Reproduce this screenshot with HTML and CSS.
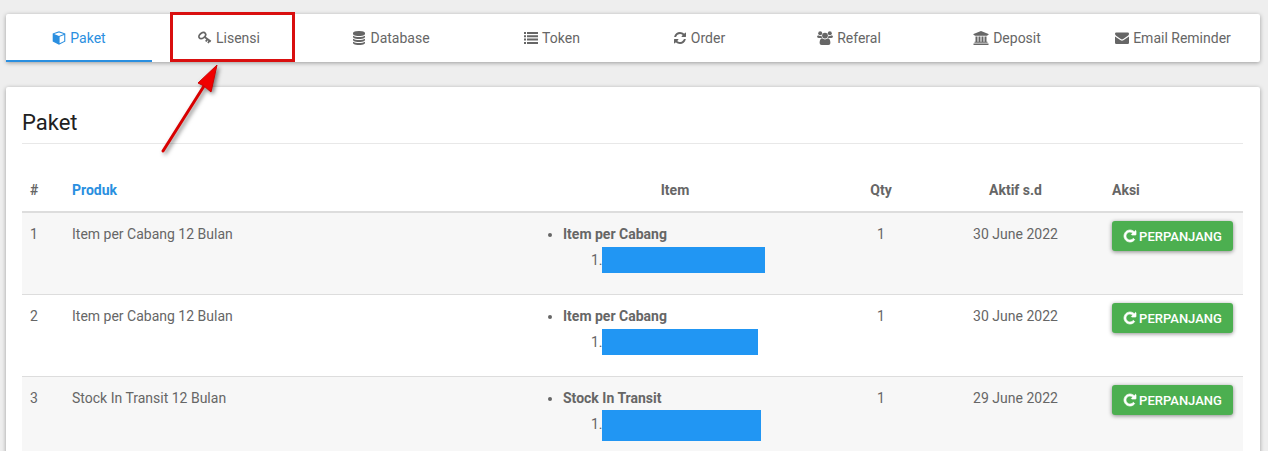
FILE: index.html
```
<!DOCTYPE html>
<html lang="id">
  <head>
    <meta charset="utf-8">
    <title>Paket</title>
    <link rel="stylesheet" href="styles.css">
  </head>
  <body>
    <svg class="sprite" aria-hidden="true">
      <symbol id="icon-repeat" viewBox="0 0 1792 1792"><path d="M1664 256v448q0 26-19 45t-45 19h-448q-42 0-59-40-17-39 14-69l138-138q-148-137-349-137-104 0-198.5 40.5t-163.5 109.5-109.5 163.5-40.5 198.5 40.5 198.5 109.5 163.5 163.5 109.5 198.5 40.5q119 0 225-52t179-147q7-10 23-12 15 0 25 9l137 138q9 8 9.5 20.5t-7.5 22.5q-109 132-264 204.5t-327 72.5q-156 0-298-61t-245-164-164-245-61-298 61-298 164-245 245-164 298-61q147 0 284.5 55.5t244.5 156.5l130-129q29-31 70-14 39 17 39 59z"/></symbol>
    </svg>

    <nav class="tabs">
      <a href="#" class="tab active">
        <svg class="icon" viewBox="0 0 14 14"><path d="M7 0.3L13.3 2.6V10.6L7 13.8L0.7 10.6V2.6zM7 1.4L2.2 3.1L7 4.9L11.8 3.1zM7.6 12.3L12.2 10V4.1L7.6 5.8z" fill-rule="evenodd"/></svg>
        Paket
      </a>
      <a href="#" class="tab">
        <svg class="icon" viewBox="0 0 14 14"><g fill="none" stroke="currentColor"><ellipse cx="4.3" cy="4.6" rx="3.7" ry="2.5" transform="rotate(-35 4.3 4.6)" stroke-width="1.7"/><path d="M6.6 6L12.8 10.4M9.3 8.2L7.8 10.4M11.5 9.8L10 12" stroke-width="1.8"/></g></svg>
        Lisensi
        <span class="highlight"></span>
        <svg class="arrow" viewBox="0 0 64 92" width="64" height="92" aria-hidden="true"><path d="M4 88L45 23" stroke="#d90000" stroke-width="3" stroke-linecap="round"/><path d="M58 2L39 20L45 23L52 29z" fill="#f00000" stroke="#d00000"/></svg>
      </a>
      <a href="#" class="tab">
        <svg class="icon" viewBox="0 0 1792 1792"><path d="M896 768q237 0 443-43t325-127v170q0 69-103 128t-280 93.500-385 34.500-385-34.500-280-93.500-103-128v-170q119 84 325 127t443 43zm0 768q237 0 443-43t325-127v170q0 69-103 128t-280 93.500-385 34.500-385-34.500-280-93.500-103-128v-170q119 84 325 127t443 43zm0-384q237 0 443-43t325-127v170q0 69-103 128t-280 93.500-385 34.500-385-34.500-280-93.500-103-128v-170q119 84 325 127t443 43zm0-1152q208 0 385 34.500t280 93.500 103 128v128q0 69-103 128t-280 93.500-385 34.500-385-34.500-280-93.500-103-128v-128q0-69 103-128t280-93.500 385-34.500z"/></svg>
        Database
      </a>
      <a href="#" class="tab">
        <svg class="icon" viewBox="0 0 14 14"><path d="M0 1h2v2H0zM3 1h11v2H3zM0 4.300h2v2H0zM3 4.300h11v2H3zM0 7.600h2v2H0zM3 7.600h11v2H3zM0 11h2v2H0zM3 11h11v2H3z"/></svg>
        Token
      </a>
      <a href="#" class="tab">
        <svg class="icon" viewBox="0 0 1792 1792"><path d="M1639 1056q0 5-1 7-64 268-268 434.500t-478 166.500q-146 0-282.500-55t-243.500-157l-129 129q-19 19-45 19t-45-19-19-45v-448q0-26 19-45t45-19h448q26 0 45 19t19 45-19 45l-137 137q71 66 161 102t187 36q134 0 250-65t186-179q11-17 53-117 8-23 30-23h192q13 0 22.500 9.500t9.500 22.500zm25-800v448q0 26-19 45t-45 19h-448q-26 0-45-19t-19-45 19-45l138-138q-148-137-349-137-134 0-250 65t-186 179q-11 17-53 117-8 23-30 23h-199q-13 0-22.500-9.500t-9.500-22.500v-7q65-268 270-434.500t480-166.500q146 0 284 55.500t245 156.500l130-129q19-19 45-19t45 19 19 45z"/></svg>
        Order
      </a>
      <a href="#" class="tab">
        <svg class="icon icon-wide" viewBox="0 0 16 14"><circle cx="3.200" cy="2.300" r="2"/><circle cx="12.800" cy="2.300" r="2"/><circle cx="8" cy="4.600" r="2.900"/><path d="M1 4.300Q3 5.600 4.600 4.700Q4.500 6 5.200 7H1.600Q0 7 0 5.600zM15 4.300Q13 5.600 11.400 4.700Q11.500 6 10.800 7H14.400Q16 7 16 5.600zM5 7.300Q8 9.600 11 7.300Q13.400 8 13.400 12Q13.400 14 11.400 14H4.600Q2.600 14 2.600 12Q2.600 8 5 7.300z"/></svg>
        Referal
      </a>
      <a href="#" class="tab">
        <svg class="icon icon-wide" viewBox="0 0 15 14"><path d="M7.500 0L15 3V4H14V4.800H1V4H0V3zM2 5.500H4V10.800H5V5.500H7V10.800H8V5.500H10V10.800H11V5.500H13V10.800H14V11.800H1V10.800H2zM0 12.500H15V14H0z"/></svg>
        Deposit
      </a>
      <a href="#" class="tab">
        <svg class="icon" viewBox="0 0 14 14"><path d="M1.200 1.500H12.800Q14 1.500 14 2.700Q14 4 12.900 4.800L8.200 8Q7 8.800 5.800 8L1.100 4.800Q0 4 0 2.800Q0 1.500 1.200 1.500zM0 5.400L5.600 9.300Q7 10.200 8.400 9.300L14 5.400V11.700Q14 13 12.800 13H1.200Q0 13 0 11.700z"/></svg>
        Email Reminder
      </a>
    </nav>

    <main class="card">
      <h1>Paket</h1>
      <table class="packages">
        <colgroup>
          <col class="col-no">
          <col class="col-product">
          <col class="col-item">
          <col class="col-qty">
          <col class="col-date">
          <col class="col-action">
        </colgroup>
        <thead>
          <tr>
            <th>#</th>
            <th><a href="#">Produk</a></th>
            <th class="center">Item</th>
            <th class="center">Qty</th>
            <th class="center">Aktif s.d</th>
            <th>Aksi</th>
          </tr>
        </thead>
        <tbody>
          <tr>
            <td>1</td>
            <td>Item per Cabang 12 Bulan</td>
            <td>
              <ul>
                <li><b>Item per Cabang</b>
                  <ol><li><span class="mask" style="width: 163px"></span></li></ol>
                </li>
              </ul>
            </td>
            <td class="center">1</td>
            <td class="center">30 June 2022</td>
            <td><button type="button" class="btn"><svg class="icon"><use href="#icon-repeat"/></svg> Perpanjang</button></td>
          </tr>
          <tr>
            <td>2</td>
            <td>Item per Cabang 12 Bulan</td>
            <td>
              <ul>
                <li><b>Item per Cabang</b>
                  <ol><li><span class="mask" style="width: 156px"></span></li></ol>
                </li>
              </ul>
            </td>
            <td class="center">1</td>
            <td class="center">30 June 2022</td>
            <td><button type="button" class="btn"><svg class="icon"><use href="#icon-repeat"/></svg> Perpanjang</button></td>
          </tr>
          <tr>
            <td>3</td>
            <td>Stock In Transit 12 Bulan</td>
            <td>
              <ul>
                <li><b>Stock In Transit</b>
                  <ol><li><span class="mask tall" style="width: 159px"></span></li></ol>
                </li>
              </ul>
            </td>
            <td class="center">1</td>
            <td class="center">29 June 2022</td>
            <td><button type="button" class="btn"><svg class="icon"><use href="#icon-repeat"/></svg> Perpanjang</button></td>
          </tr>
        </tbody>
      </table>
    </main>
  </body>
</html>
```
FILE: styles.css
```
* {
  box-sizing: border-box;
}

body {
  margin: 0;
  padding: 14px 8px 0 6px;
  background-color: #eee;
  color: #666;
  font-family: Roboto, sans-serif;
  font-size: 14px;
  line-height: 26px;
  overflow: hidden;
}

a {
  color: #2a8fe0;
  text-decoration: none;
}

.sprite {
  display: none;
}

.icon {
  width: 14px;
  height: 14px;
  fill: currentColor;
}

.icon-wide {
  width: 16px;
}

.tabs,
.card {
  background-color: #fff;
  border-radius: 2px;
  box-shadow: 0 1px 4px rgba(0, 0, 0, 0.35);
}

.tabs {
  display: grid;
  grid-template-columns: 146fr 154fr 170fr 152fr 142fr 158fr 158fr 174fr;
  margin-bottom: 25px;
}

.tab {
  position: relative;
  display: flex;
  align-items: center;
  justify-content: center;
  gap: 4px;
  height: 48px;
  padding-top: 2px;
  border-bottom: 2px solid transparent;
  color: #666;
  white-space: nowrap;
}

.tab.active {
  color: #2a8fe0;
  border-bottom-color: #2a8fe0;
}

/* red marker around the tab and the arrow pointing at it */
.highlight {
  position: absolute;
  top: -2px;
  left: 18px;
  width: 125px;
  height: 50px;
  border: 3px solid #d90f0f;
}

.arrow {
  position: absolute;
  top: 49px;
  left: 7px;
  z-index: 1;
  filter: drop-shadow(2px 2px 2px rgba(0, 0, 0, 0.5));
}

.card {
  padding: 20px 17px 0 16px;
}

h1 {
  margin: 0 0 25px;
  padding-bottom: 4px;
  border-bottom: 1px solid #e8e8e8;
  color: #212121;
  font-size: 22px;
  font-weight: 400;
  line-height: 32px;
}

.packages {
  width: 100%;
  table-layout: fixed;
  border-collapse: collapse;
}

.col-no {
  width: 42px;
}

.col-item {
  width: 320px;
}

.col-qty {
  width: 92px;
}

.col-date {
  width: 177px;
}

.col-action {
  width: 139px;
}

.packages th,
.packages td {
  padding: 8px;
  text-align: left;
  vertical-align: top;
}

.packages th {
  border-bottom: 2px solid #ddd;
  font-weight: 700;
}

.packages td {
  border-top: 1px solid #ddd;
}

.packages .center {
  text-align: center;
}

.packages tbody tr:nth-child(odd) {
  background-color: #f7f7f7;
}

.packages ul {
  margin: 0 0 13px;
  padding-left: 40px;
}

.packages ol {
  margin: 0;
  padding-left: 43px;
}

.packages ol li {
  position: relative;
  height: 26px;
}

.mask {
  position: absolute;
  top: 0;
  left: -4px;
  height: 26px;
  background-color: #2196f3;
}

.mask.tall {
  top: -1px;
  height: 31px;
}

.btn {
  display: flex;
  align-items: center;
  justify-content: center;
  gap: 2px;
  width: 100%;
  max-width: 121px;
  height: 30px;
  padding: 0;
  border: none;
  border-radius: 3px;
  background-color: #4caf50;
  box-shadow: 0 1px 4px rgba(0, 0, 0, 0.45);
  color: #fff;
  font-family: inherit;
  font-size: 13px;
  font-weight: 500;
  text-transform: uppercase;
  cursor: pointer;
}

.btn .icon {
  stroke: currentColor;
  stroke-width: 90px;
}
```
